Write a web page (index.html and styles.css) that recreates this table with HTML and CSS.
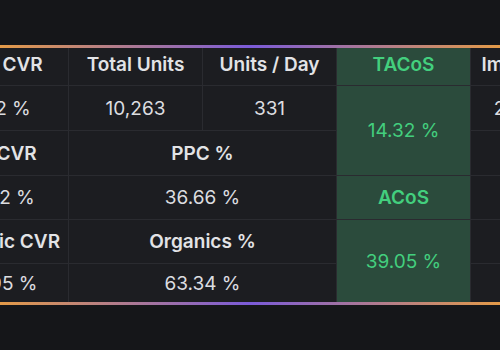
FILE: index.html
```html
<!DOCTYPE html>
<html>
<head>
<meta charset="utf-8">
<link rel="stylesheet" href="styles.css">
</head>
<body>
<div class="panel">
  <div class="bar"></div>
  <div class="grid">
    <div class="cell head top c1 r1">Unit CVR</div>
    <div class="cell head top c2 r1">Total Units</div>
    <div class="cell head top c3 r1">Units / Day</div>
    <div class="cell head top green c4 r1">TACoS</div>
    <div class="cell head top c5 r1">Impressions</div>

    <div class="cell val c1 r2">8.12 %</div>
    <div class="cell val c2 r2">10,263</div>
    <div class="cell val c3 r2">331</div>
    <div class="cell val green c4 r2 span2">14.32 %</div>
    <div class="cell val c5 r2">2,158,402</div>

    <div class="cell head c1 r3">Ad CVR</div>
    <div class="cell head c23 r3">PPC %</div>
    <div class="cell head c5 r3">CTR</div>

    <div class="cell val c1 r4">12.12 %</div>
    <div class="cell val c23 r4">36.66 %</div>
    <div class="cell head green c4 r4">ACoS</div>
    <div class="cell val c5 r4">0.42 %</div>

    <div class="cell head c1 r5">Organic CVR</div>
    <div class="cell head c23 r5">Organics %</div>
    <div class="cell val green c4 r5 span2">39.05 %</div>
    <div class="cell head c5 r5">CPC</div>

    <div class="cell val c1 r6">10.95 %</div>
    <div class="cell val c23 r6">63.34 %</div>
    <div class="cell val c5 r6">$1.12</div>
  </div>
  <div class="bar"></div>
</div>
</body>
</html>
```
FILE: styles.css
```css
html, body {
  margin: 0;
  padding: 0;
  background: #151619;
  overflow: hidden;
}
body {
  width: 500px;
  height: 350px;
  font-family: Inter, "Liberation Sans", sans-serif;
}
.panel {
  margin-top: 45px;
  width: 500px;
  overflow: hidden;
}
.bar {
  height: 3px;
  background: linear-gradient(90deg, #e39a48 0%, #7b5bd9 50%, #e39a48 100%);
}
.grid {
  display: grid;
  margin-left: -65px;
  width: 670px;
  grid-template-columns: 133px 133px 133px 133px 133px;
  grid-template-rows: 37px 44px 44px 43px 43px 38px;
  gap: 1px;
  background: #2a2b30;
}
.cell {
  background: #1c1d21;
  display: flex;
  align-items: center;
  justify-content: center;
  white-space: nowrap;
  font-size: 19px;
  color: #e2e3e6;
}
.top { padding-bottom: 5px; }
.head { font-weight: 600; }
.val { font-weight: 400; color: #dcdde0; }
.green { background: #2b4b3c; color: #43cf7e; }
.c1 { grid-column: 1; }
.c2 { grid-column: 2; }
.c3 { grid-column: 3; }
.c23 { grid-column: 2 / 4; }
.c4 { grid-column: 4; }
.c5 { grid-column: 5; }
.r1 { grid-row: 1; }
.r2 { grid-row: 2; }
.r3 { grid-row: 3; }
.r4 { grid-row: 4; }
.r5 { grid-row: 5; }
.r6 { grid-row: 6; }
.span2 { grid-row-end: span 2; }
```
